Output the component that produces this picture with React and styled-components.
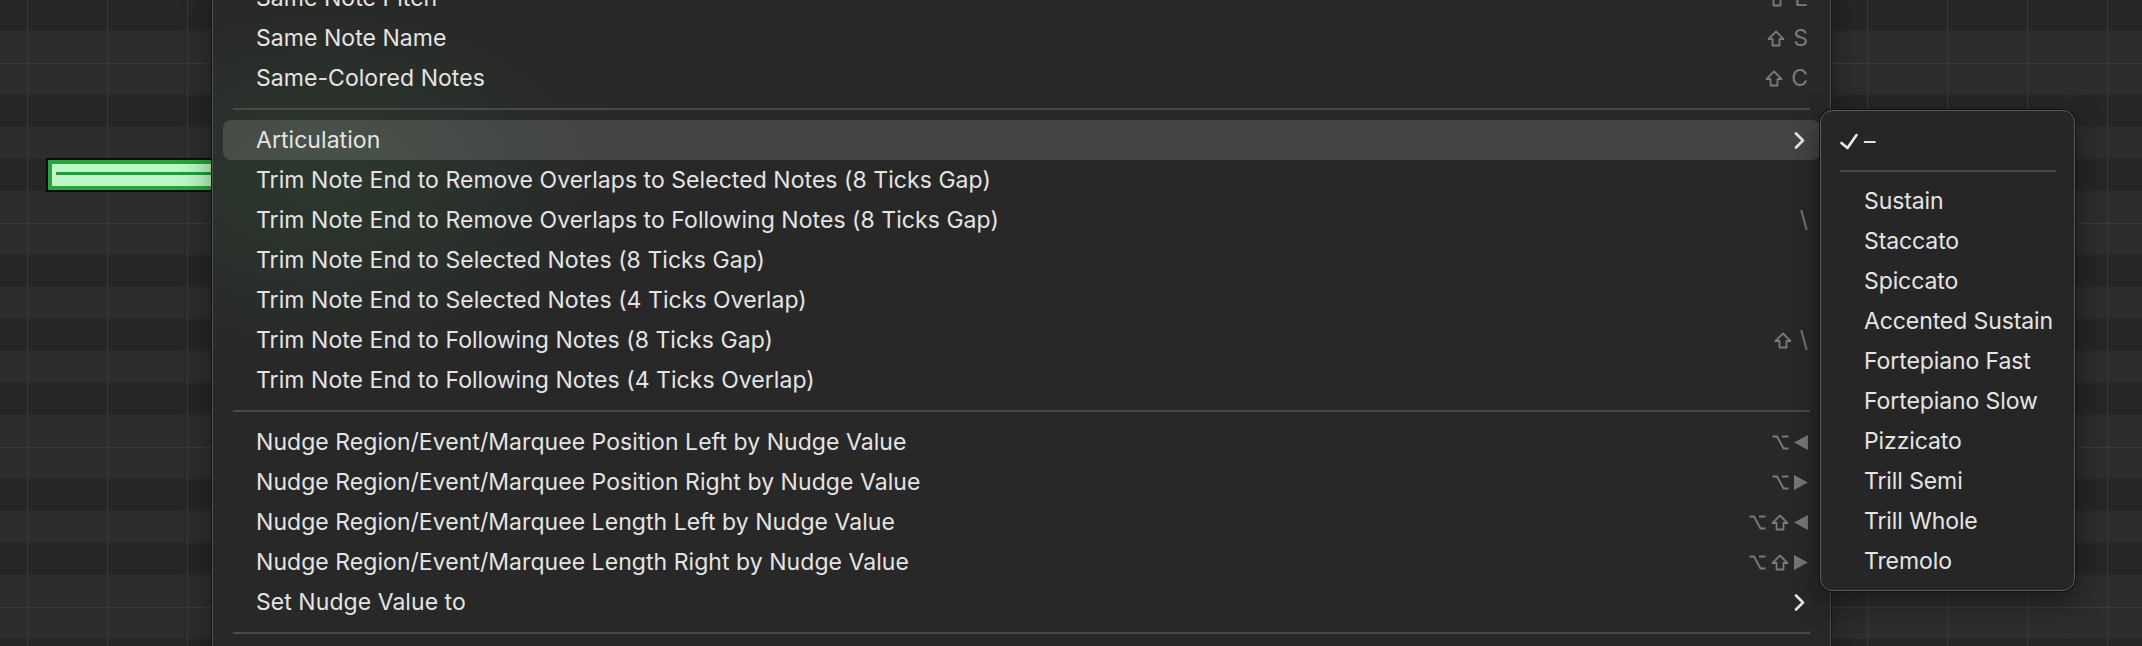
import React from 'react'
import styled, { createGlobalStyle } from 'styled-components'

const Global = createGlobalStyle`
  html, body { margin: 0; padding: 0; background: #272727; }
  body { font-family: Inter, "Noto Sans", "Liberation Sans", sans-serif; }
`

const Stage = styled.div`
  position: relative;
  width: 2142px;
  height: 646px;
  overflow: hidden;
  background: #272727;
`

const Grid = styled.div`
  display: flex;
  flex-direction: column;
  margin-top: -1px;
`

const KeyRow = styled.div`
  flex: none;
  height: 32px;
  box-sizing: border-box;
  background-color: ${p => (p.$black ? '#262626' : '#2d2d2d')};
  border-top: ${p => (p.$edge ? '1px solid #3a3a3a' : 'none')};
  background-image: linear-gradient(to right, #393939 0 1px, transparent 1px);
  background-size: 80px 100%;
  background-position: 27px 0;
`

const Note = styled.div`
  position: absolute;
  left: 46px;
  top: 158px;
  width: 220px;
  height: 34px;
  box-sizing: border-box;
  border: 2px solid #0a0a0a;
  background: #bdf5c4;
  box-shadow: inset 0 0 0 4px #27a43b;
  &::after {
    content: '';
    position: absolute;
    left: 8px;
    right: 0;
    top: 12px;
    height: 3px;
    background: #229c36;
  }
`

const Menu = styled.div`
  position: absolute;
  left: 212px;
  top: -23px;
  width: 1619px;
  box-sizing: border-box;
  padding: 0 10px 40px;
  display: flex;
  flex-direction: column;
  border: 1px solid #4f4f4f;
  border-radius: 12px;
  background:
    radial-gradient(ellipse 420px 260px at 110px 200px, rgba(70, 165, 85, 0.13), transparent 75%),
    #282828;
  box-shadow: 0 0 0 1px #151515, 0 10px 30px rgba(0, 0, 0, 0.4);
  color: #e4e4e4;
  font-size: 23px;
`

const SubMenu = styled.div`
  position: absolute;
  left: 1820px;
  top: 110px;
  width: 255px;
  box-sizing: border-box;
  padding: 10px 10px 9px;
  display: flex;
  flex-direction: column;
  border: 1px solid #5a5a5a;
  border-radius: 12px;
  background: #262626;
  box-shadow: 0 0 0 1px #121212, 0 10px 30px rgba(0, 0, 0, 0.45);
  color: #e4e4e4;
  font-size: 23px;
`

const Item = styled.div`
  flex: none;
  height: 40px;
  display: flex;
  align-items: center;
  box-sizing: border-box;
  padding: 0 12px 0 ${p => (p.$sub ? 9 : 33)}px;
  border-radius: 8px;
  background: ${p => (p.$active ? 'rgba(255, 255, 255, 0.135)' : 'transparent')};
  white-space: nowrap;
`

const Gutter = styled.span`
  flex: none;
  width: 24px;
  display: flex;
  align-items: center;
`

const Label = styled.span`
  flex: 1;
  letter-spacing: ${p => (p.$sub ? '-0.1px' : '0.05px')};
`

const Keys = styled.span`
  flex: none;
  display: flex;
  align-items: center;
  gap: 5px;
  color: #7a7a7a;
`

const KeyChar = styled.span`
  margin-left: 3px;
  line-height: 1;
`

const Separator = styled.div`
  flex: none;
  height: 2px;
  margin: ${p => (p.$sub ? '9px 8px 9px 9px' : '10px 10px')};
  background: #4a4a4a;
`

const Shift = () => (
  <svg width="18" height="17" viewBox="0 0 18 17">
    <path d="M9 1.5 L16.5 9 H12.5 V15.5 H5.5 V9 H1.5 Z" fill="none" stroke="#7a7a7a" strokeWidth="1.8" strokeLinejoin="round" />
  </svg>
)

const Option = () => (
  <svg width="17" height="15" viewBox="0 0 17 15">
    <path d="M0.5 1.5 H5 L11.5 13.5 H16.5 M10 1.5 H16.5" fill="none" stroke="#7a7a7a" strokeWidth="1.9" />
  </svg>
)

const Arrow = ({ dir }) => (
  <svg width="14" height="15" viewBox="0 0 14 15">
    <path d={dir === 'left' ? 'M14 0 V15 L0 7.5 Z' : 'M0 0 V15 L14 7.5 Z'} fill="#777" />
  </svg>
)

const Chevron = styled.svg`
  flex: none;
  margin-right: 3px;
`

const SubArrow = () => (
  <Chevron width="11" height="17" viewBox="0 0 11 17">
    <path d="M2 1.5 L9 8.5 L2 15.5" fill="none" stroke="#e6e6e6" strokeWidth="2.6" strokeLinecap="round" strokeLinejoin="round" />
  </Chevron>
)

const Check = () => (
  <svg width="18" height="17" viewBox="0 0 18 17">
    <path d="M1.5 10 L7.5 15 L16.5 2" fill="none" stroke="#ececec" strokeWidth="2.6" strokeLinecap="round" strokeLinejoin="round" />
  </svg>
)

const renderKey = (k, i) => {
  if (k === 'shift') return <Shift key={i} />
  if (k === 'opt') return <Option key={i} />
  if (k === 'left' || k === 'right') return <Arrow key={i} dir={k} />
  return <KeyChar key={i}>{k}</KeyChar>
}

const mainItems = [
  { label: 'Same Note Pitch', keys: ['shift', 'E'] },
  { label: 'Same Note Name', keys: ['shift', 'S'] },
  { label: 'Same-Colored Notes', keys: ['shift', 'C'] },
  'sep',
  { label: 'Articulation', sub: true, active: true },
  { label: 'Trim Note End to Remove Overlaps to Selected Notes (8 Ticks Gap)' },
  { label: 'Trim Note End to Remove Overlaps to Following Notes (8 Ticks Gap)', keys: ['\\'] },
  { label: 'Trim Note End to Selected Notes (8 Ticks Gap)' },
  { label: 'Trim Note End to Selected Notes (4 Ticks Overlap)' },
  { label: 'Trim Note End to Following Notes (8 Ticks Gap)', keys: ['shift', '\\'] },
  { label: 'Trim Note End to Following Notes (4 Ticks Overlap)' },
  'sep',
  { label: 'Nudge Region/Event/Marquee Position Left by Nudge Value', keys: ['opt', 'left'] },
  { label: 'Nudge Region/Event/Marquee Position Right by Nudge Value', keys: ['opt', 'right'] },
  { label: 'Nudge Region/Event/Marquee Length Left by Nudge Value', keys: ['opt', 'shift', 'left'] },
  { label: 'Nudge Region/Event/Marquee Length Right by Nudge Value', keys: ['opt', 'shift', 'right'] },
  { label: 'Set Nudge Value to', sub: true },
  'sep',
]

const articulations = [
  'Sustain', 'Staccato', 'Spiccato', 'Accented Sustain', 'Fortepiano Fast',
  'Fortepiano Slow', 'Pizzicato', 'Trill Semi', 'Trill Whole', 'Tremolo',
]

const noteNames = ['F#', 'F', 'E', 'D#', 'D', 'C#', 'C', 'B', 'A#', 'A', 'G#', 'G']

const App = () => {
  const rows = Array.from({ length: 22 }, (_, i) => noteNames[i % 12])
  return (
    <Stage>
      <Global />
      <Grid>
        {rows.map((n, i) => (
          <KeyRow key={i} $black={n.includes('#')} $edge={n === 'E' || n === 'B'} />
        ))}
      </Grid>
      <Note />
      <Menu>
        {mainItems.map((it, i) =>
          it === 'sep' ? (
            <Separator key={i} />
          ) : (
            <Item key={i} $active={it.active}>
              <Label>{it.label}</Label>
              {it.keys && <Keys>{it.keys.map(renderKey)}</Keys>}
              {it.sub && <SubArrow />}
            </Item>
          )
        )}
      </Menu>
      <SubMenu>
        <Item $sub>
          <Gutter><Check /></Gutter>
          <Label $sub>–</Label>
        </Item>
        <Separator $sub />
        {articulations.map(a => (
          <Item key={a} $sub>
            <Gutter />
            <Label $sub>{a}</Label>
          </Item>
        ))}
      </SubMenu>
    </Stage>
  )
}

export default App
